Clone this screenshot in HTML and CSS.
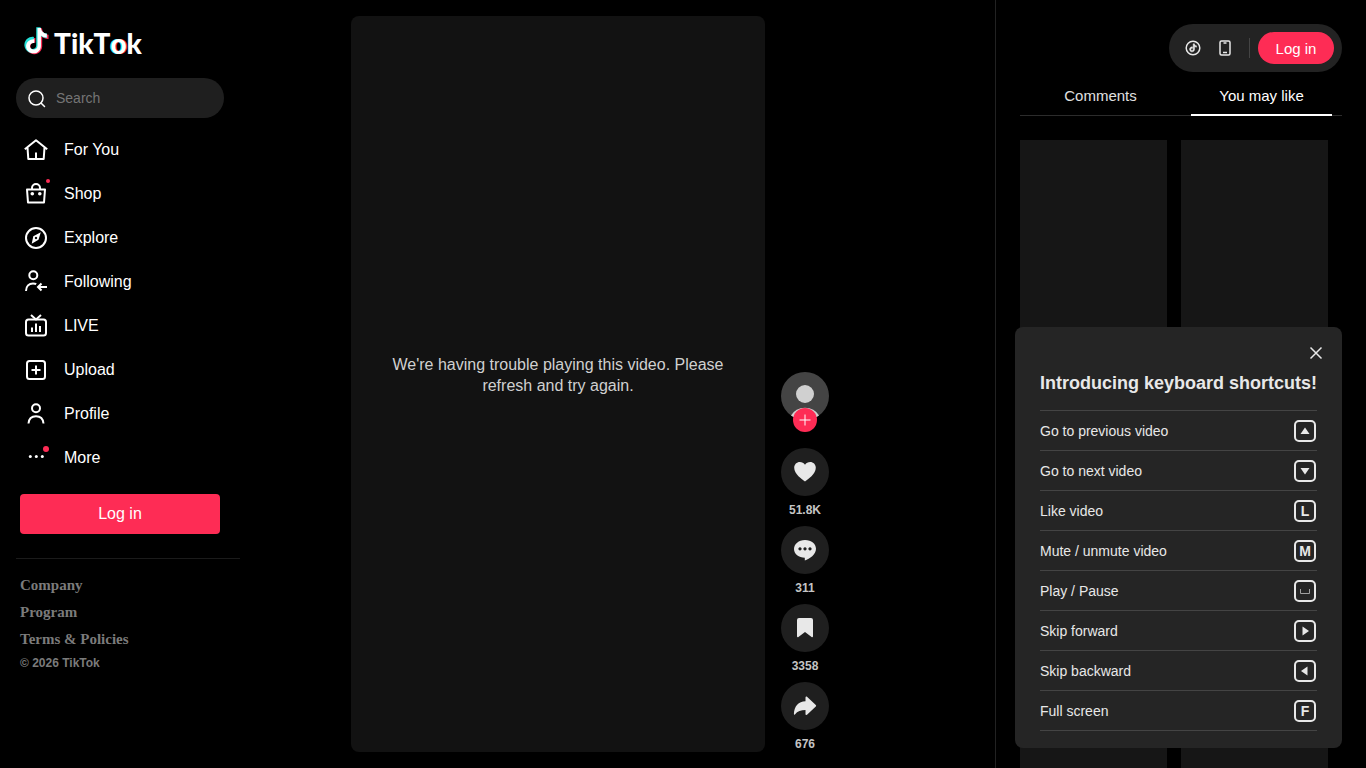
FILE: index.html
```html
<!DOCTYPE html>
<html lang="en">
<head>
    <meta charset="UTF-8">
    <meta name="viewport" content="width=device-width, initial-scale=1.0">
    <title>TikTok - Make Your Day</title>
    <link rel="stylesheet" href="styles.css">
</head>
<body>

<!-- shared note shape, used by the logo and the coin icon -->
<svg class="sprite" aria-hidden="true">
    <symbol id="note" viewBox="0 -1 24 26" overflow="visible">
        <path d="M12.525.02c1.31-.02 2.61-.01 3.91-.02.08 1.53.63 3.09 1.75 4.17 1.12 1.11 2.7 1.62 4.24 1.79v4.03c-1.44-.05-2.89-.35-4.2-.97-.57-.26-1.1-.59-1.62-.93-.01 2.92.01 5.84-.02 8.75-.08 1.4-.54 2.79-1.35 3.94-1.31 1.92-3.58 3.17-5.91 3.21-1.43.08-2.86-.31-4.08-1.03-2.02-1.19-3.44-3.37-3.65-5.71-.02-.5-.03-1-.01-1.49.18-1.9 1.12-3.72 2.58-4.96 1.66-1.44 3.98-2.13 6.15-1.72.02 1.48-.04 2.96-.04 4.44-.99-.32-2.15-.23-3.02.37-.63.41-1.11 1.04-1.36 1.75-.21.51-.15 1.07-.14 1.61.24 1.64 1.82 3.02 3.5 2.87 1.12-.01 2.19-.66 2.77-1.61.19-.33.4-.67.41-1.06.1-1.79.06-3.57.07-5.36.01-4.03-.01-8.05.02-12.07z"/>
    </symbol>
</svg>

<div class="app">
    <div class="sidebar">
        <a class="logo" href="#" aria-label="TikTok">
            <svg width="26" height="30" viewBox="0 -1 24 26">
                <use href="#note" x="0.2" y="-0.8" width="24" height="26" fill="#fe2c55"/>
                <use href="#note" x="-1.2" y="-1.8" width="24" height="26" fill="#25e0d8"/>
                <path fill="#fff" d="M12.500 0h3.100c.2 2.800 2.300 5 5.400 5.400v3.300c-2-.1-3.800-.7-5.400-1.800v9.600c0 3.900-3 6.900-6.800 6.900-3.700 0-6.900-2.900-6.900-6.500 0-4 3.500-6.900 7.600-6.600v3.600c-2.300-.4-4 .9-4 2.900 0 1.800 1.500 3.100 3.300 3.100 2.200 0 3.700-1.500 3.700-3.800z"/>
            </svg>
            <span class="logo-text">TikT<span class="logo-o">o</span>k</span>
        </a>

        <form class="search">
            <svg width="20" height="20" viewBox="0 0 20 20">
                <circle cx="9" cy="10" r="7"/>
                <path d="M14 15l3.500 3.500"/>
            </svg>
            <input type="text" placeholder="Search" aria-label="Search">
        </form>

        <nav class="nav">
            <a href="#">
                <svg width="24" height="24" viewBox="0 0 24 24"><path stroke-linejoin="round" d="M.8 11.300L12 2.300l11.200 9M3.500 9.500L4.300 21h15.400L20.500 9.500M12 14.500V21"/></svg>
                For You
            </a>
            <a href="#">
                <svg width="24" height="24" viewBox="0 0 24 24"><path stroke-linejoin="round" d="M3 7.500h18L20 20.500H4zM8 7.500V6a4 4 0 0 1 8 0v1.500"/><circle class="fill" cx="8.300" cy="11.700" r="1.800"/><circle class="fill" cx="15.800" cy="11.700" r="1.800"/><circle class="red" cx="24" cy="-1" r="2"/></svg>
                Shop
            </a>
            <a href="#">
                <svg width="24" height="24" viewBox="0 0 24 24"><circle cx="12" cy="12" r="10"/><path class="fill" fill-rule="evenodd" d="M16.800 6.300L9.300 10.200 7.700 17.700 14.500 13.800zM12 10.800a1.200 1.200 0 1 0 .01 0z"/></svg>
                Explore
            </a>
            <a href="#">
                <svg width="24" height="24" viewBox="0 0 24 24"><circle cx="9.300" cy="5.300" r="4"/><path d="M2 21c0-4.800 3-7.500 7-7.500 1.400 0 2.400.2 3.200.7M23 17h-9M17.500 13.500L14 17l3.500 3.500"/></svg>
                Following
            </a>
            <a href="#">
                <svg width="24" height="24" viewBox="0 0 24 24"><rect x="2" y="5.500" width="20" height="16" rx="2.500"/><path d="M7 1l5 4.500L17 1M8 13.500v4.500M12 9.500v8.500M16 12v6"/></svg>
                LIVE
            </a>
            <a href="#">
                <svg width="24" height="24" viewBox="0 0 24 24"><rect x="3" y="3" width="18" height="18" rx="2.500"/><path d="M12 7.500v9M7.500 12h9"/></svg>
                Upload
            </a>
            <a href="#">
                <svg width="24" height="24" viewBox="0 0 24 24"><circle cx="12" cy="6.300" r="4"/><path d="M4.500 21.500c.4-4.600 3.300-7.200 7.500-7.200s7.100 2.600 7.500 7.200"/></svg>
                Profile
            </a>
            <a href="#">
                <svg width="24" height="24" viewBox="0 0 24 24"><circle class="fill" cx="6.300" cy="10.500" r="1.500"/><circle class="fill" cx="12.300" cy="10.500" r="1.500"/><circle class="fill" cx="18.300" cy="10.500" r="1.500"/><circle class="red" cx="22" cy="3" r="3"/></svg>
                More
            </a>
        </nav>

        <button class="login-button">Log in</button>

        <div class="footer">
            <h4>Company</h4>
            <h4>Program</h4>
            <h4>Terms &amp; Policies</h4>
            <p>© 2026 TikTok</p>
        </div>
    </div>

    <main class="feed">
        <div class="video">
            <p>We're having trouble playing this video. Please refresh and try again.</p>
        </div>
        <div class="actions">
            <div class="avatar">
                <svg width="48" height="48" viewBox="0 0 48 48">
                    <circle cx="24" cy="24" r="24" fill="#444"/>
                    <circle cx="24" cy="22" r="9" fill="#d0d0d0"/>
                    <path d="M10 43.500a16 15 0 0 1 28 0A24 24 0 0 1 10 43.500z" fill="#d0d0d0"/>
                </svg>
                <button class="follow-button" aria-label="Follow">
                    <svg width="12" height="12" viewBox="0 0 12 12"><path d="M6 .5v11M.5 6h11"/></svg>
                </button>
            </div>
            <div class="action">
                <button aria-label="Like">
                    <svg width="24" height="24" viewBox="0 0 24 24"><path d="M12 21.500C9 19.500 1.200 14 1.200 7.800 1.200 4.300 3.800 2 6.800 2 9 2 10.800 3 12 4.800 13.200 3 15 2 17.200 2c3 0 5.600 2.300 5.600 5.800 0 6.200-7.800 11.700-10.800 13.700z"/></svg>
                </button>
                <strong>51.8K</strong>
            </div>
            <div class="action">
                <button aria-label="Comments">
                    <svg width="24" height="24" viewBox="0 0 24 24"><path fill-rule="evenodd" d="M12 2C5.600 2 1 6 1 11c0 5.200 4.800 8.700 10.800 8.700v2.800c5-1.700 11.200-6 11.200-11.800C23 5.800 18.400 2 12 2zM7 9.300a1.600 1.600 0 1 1-.01 0zM12 9.300a1.600 1.600 0 1 1-.01 0zM17 9.300a1.600 1.600 0 1 1-.01 0z"/></svg>
                </button>
                <strong>311</strong>
            </div>
            <div class="action">
                <button aria-label="Save">
                    <svg width="24" height="24" viewBox="0 0 24 24"><path d="M4 4a2 2 0 0 1 2-2h12a2 2 0 0 1 2 2v16.300c0 .8-.8 1.200-1.400.7L12 16l-6.600 5c-.6.500-1.400.1-1.400-.7z"/></svg>
                </button>
                <strong>3358</strong>
            </div>
            <div class="action">
                <button aria-label="Share">
                    <svg width="24" height="24" viewBox="0 0 24 24"><path d="M12.500 3.400c0-.8.9-1.200 1.500-.7l8.800 8.300c.5.500.5 1 0 1.500L14 20.700c-.6.500-1.500.1-1.500-.7v-4C8 16 4.500 17.200 1.900 20.400c-.4.500-1 .2-1-.4C1.200 12 5.500 7.700 12.500 7.300z"/></svg>
                </button>
                <strong>676</strong>
            </div>
        </div>
    </main>

    <aside class="panel">
        <div class="top-bar">
            <button class="icon-button" aria-label="Get coins">
                <svg width="16" height="16" viewBox="0 0 16 16"><circle cx="8" cy="8" r="6.800"/><use class="fill" href="#note" x="4" y="3.500" width="8" height="8.700"/></svg>
            </button>
            <button class="icon-button" aria-label="Get app">
                <svg width="16" height="16" viewBox="0 0 16 16"><rect x="3" y="1" width="10" height="14" rx="1.500"/><path d="M6.500 3h3M6 12.500h4"/></svg>
            </button>
            <span class="divider"></span>
            <button class="login-pill">Log in</button>
        </div>
        <div class="tabs">
            <button>Comments</button>
            <button class="active">You may like</button>
        </div>
        <div class="cards">
            <div class="card"></div>
            <div class="card"></div>
            <div class="card"></div>
            <div class="card"></div>
        </div>
    </aside>
</div>

<div class="shortcuts">
    <button class="close-button" aria-label="Close">
        <svg width="14" height="14" viewBox="0 0 14 14"><path d="M1.500 1.500l11 11M12.500 1.500l-11 11"/></svg>
    </button>
    <h2>Introducing keyboard shortcuts!</h2>
    <ul>
        <li>Go to previous video <kbd><svg width="10" height="10" viewBox="0 0 10 10"><path d="M5 1.500l4.500 6.500H.5z"/></svg></kbd></li>
        <li>Go to next video <kbd><svg width="10" height="10" viewBox="0 0 10 10"><path d="M5 8.500L9.500 2H.5z"/></svg></kbd></li>
        <li>Like video <kbd>L</kbd></li>
        <li>Mute / unmute video <kbd>M</kbd></li>
        <li>Play / Pause <kbd><svg class="line" width="10" height="10" viewBox="0 0 10 10"><path d="M.5 3v4.500h9V3"/></svg></kbd></li>
        <li>Skip forward <kbd><svg width="10" height="10" viewBox="0 0 10 10"><path d="M9 5L2.500.5v9z"/></svg></kbd></li>
        <li>Skip backward <kbd><svg width="10" height="10" viewBox="0 0 10 10"><path d="M1 5L7.500.5v9z"/></svg></kbd></li>
        <li>Full screen <kbd>F</kbd></li>
    </ul>
</div>

</body>
</html>
```
FILE: styles.css
```css
* {
    box-sizing: border-box;
}
body {
    margin: 0;
    background-color: #000;
    color: #fff;
    font-family: "Liberation Sans", Arial, sans-serif;
    font-size: 16px;
}
button {
    padding: 0;
    border: none;
    background: none;
    color: inherit;
    font-family: inherit;
    cursor: pointer;
}
svg {
    display: block;
    flex: none;
    overflow: visible;
}
h2, h4, p, ul {
    margin: 0;
    padding: 0;
}
.sprite {
    position: absolute;
    width: 0;
    height: 0;
}
.app {
    display: flex;
    height: 100vh;
    overflow: hidden;
}

/* Left column */
.sidebar {
    flex: none;
    width: 240px;
    padding: 24px 0 0 16px;
}
.logo {
    display: flex;
    align-items: center;
    gap: 4px;
    height: 34px;
    margin: 0 0 20px 8px;
    color: #fff;
    text-decoration: none;
}
.logo-text {
    padding-top: 4px;
    font-family: Lato, sans-serif;
    font-size: 28px;
    font-weight: 900;
    font-kerning: none;
    line-height: 30px;
}
.logo-o {
    text-shadow: -1px 0 #25f4ee, 1px 0 #fe2c55;
}
.search {
    display: flex;
    align-items: center;
    gap: 9px;
    height: 40px;
    margin-right: 16px;
    padding: 0 16px 0 11px;
    border-radius: 20px;
    background-color: #1f1f1f;
}
.search svg {
    fill: none;
    stroke: #fff;
    stroke-width: 1.5px;
    stroke-linecap: round;
}
.search input {
    width: 100%;
    padding: 0;
    border: none;
    outline: none;
    background: none;
    color: #fff;
    font-family: inherit;
    font-size: 14px;
}
.search input::placeholder {
    color: #757575;
}
.nav {
    margin-top: 10px;
}
.nav a {
    display: flex;
    align-items: center;
    gap: 16px;
    height: 44px;
    padding-left: 8px;
    color: #fff;
    text-decoration: none;
}
.nav svg {
    fill: none;
    stroke: #fff;
    stroke-width: 2;
}
.nav .fill {
    fill: #fff;
    stroke: none;
}
.nav .red {
    fill: #fe2c55;
    stroke: none;
}
.login-button {
    display: block;
    width: 200px;
    height: 40px;
    margin: 14px 0 24px 4px;
    border-radius: 4px;
    background-color: #fe2c55;
    font-size: 16px;
}
.footer {
    padding: 13px 0 0 4px;
    border-top: 1px solid #1b1b1b;
    color: #7b7b7b;
}
.footer h4 {
    font-family: "Liberation Serif", serif;
    font-size: 15px;
    line-height: 27px;
}
.footer p {
    font-size: 12px;
    font-weight: bold;
    line-height: 20px;
}

/* Player */
.feed {
    flex: 1;
    display: flex;
    justify-content: center;
    gap: 16px;
    padding: 16px 55px 16px 0;
}
.video {
    display: flex;
    align-items: center;
    aspect-ratio: 9 / 16;
    padding: 0 32px;
    border-radius: 8px;
    background-color: #121212;
    color: #d0d0d0;
    line-height: 21px;
    text-align: center;
}
.video p {
    margin-bottom: 18px;
}
.actions {
    display: flex;
    flex-direction: column;
    justify-content: flex-end;
    gap: 8px;
    width: 48px;
}
.avatar {
    position: relative;
    margin-bottom: 20px;
}
.follow-button {
    position: absolute;
    left: 12px;
    bottom: -12px;
    display: flex;
    align-items: center;
    justify-content: center;
    width: 24px;
    height: 24px;
    border-radius: 50%;
    background-color: #fe2c55;
}
.follow-button svg {
    stroke: #fff;
}
.action {
    display: flex;
    flex-direction: column;
    align-items: center;
    gap: 6px;
}
.action button {
    display: flex;
    align-items: center;
    justify-content: center;
    width: 48px;
    height: 48px;
    border-radius: 50%;
    background-color: #1f1f1f;
}
.action svg {
    fill: #e8e8e8;
}
.action strong {
    color: #c4c4c4;
    font-size: 12px;
    line-height: 16px;
}

/* Right column */
.panel {
    flex: none;
    display: flex;
    flex-direction: column;
    width: 371px;
    padding: 24px 24px 0;
    border-left: 1px solid #222;
}
.top-bar {
    align-self: flex-end;
    display: flex;
    align-items: center;
    height: 48px;
    padding: 0 8px;
    border-radius: 24px;
    background-color: #232323;
}
.icon-button {
    display: flex;
    align-items: center;
    justify-content: center;
    width: 32px;
    height: 32px;
}
.icon-button svg {
    fill: none;
    stroke: #e8e8e8;
    stroke-width: 1.5px;
}
.icon-button .fill {
    fill: #e8e8e8;
}
.divider {
    width: 1px;
    height: 20px;
    margin: 0 8px;
    background-color: #444;
}
.login-pill {
    width: 76px;
    height: 32px;
    border-radius: 16px;
    background-color: #fe2c55;
    font-size: 15px;
}
.tabs {
    display: flex;
    margin-top: 4px;
    border-bottom: 1px solid #2c2c2c;
}
.tabs button {
    position: relative;
    flex: 1;
    height: 39px;
    color: #e0e0e0;
    font-size: 15px;
}
.tabs .active {
    color: #fff;
}
.tabs .active::after {
    content: "";
    position: absolute;
    right: 10px;
    bottom: -1px;
    left: 10px;
    height: 2px;
    background-color: #fff;
}
.cards {
    flex: 1;
    display: grid;
    grid-template-columns: 1fr 1fr;
    gap: 14px;
    margin-top: 24px;
    padding-right: 14px;
}
.card {
    background-color: #161616;
}

/* Keyboard shortcuts popup */
.shortcuts {
    position: fixed;
    right: 24px;
    bottom: 20px;
    width: 327px;
    padding: 44px 25px 17px;
    border-radius: 8px;
    background-color: #252525;
    color: #e8e8e8;
}
.close-button {
    position: absolute;
    top: 19px;
    right: 19px;
}
.close-button svg {
    stroke: #e8e8e8;
    stroke-width: 1.5px;
}
.shortcuts h2 {
    margin-bottom: 15px;
    font-size: 18px;
    line-height: 24px;
    white-space: nowrap;
}
.shortcuts ul {
    border-top: 1px solid #444;
    list-style: none;
}
.shortcuts li {
    display: flex;
    align-items: center;
    justify-content: space-between;
    height: 40px;
    border-bottom: 1px solid #444;
    font-size: 14px;
}
.shortcuts kbd {
    display: flex;
    align-items: center;
    justify-content: center;
    width: 22px;
    height: 22px;
    margin-right: 1px;
    border: 2px solid #e8e8e8;
    border-radius: 5px;
    font-family: inherit;
    font-size: 14px;
    font-weight: bold;
}
.shortcuts kbd svg {
    fill: #e8e8e8;
}
.shortcuts kbd .line {
    fill: none;
    stroke: #a0a0a0;
}
```
